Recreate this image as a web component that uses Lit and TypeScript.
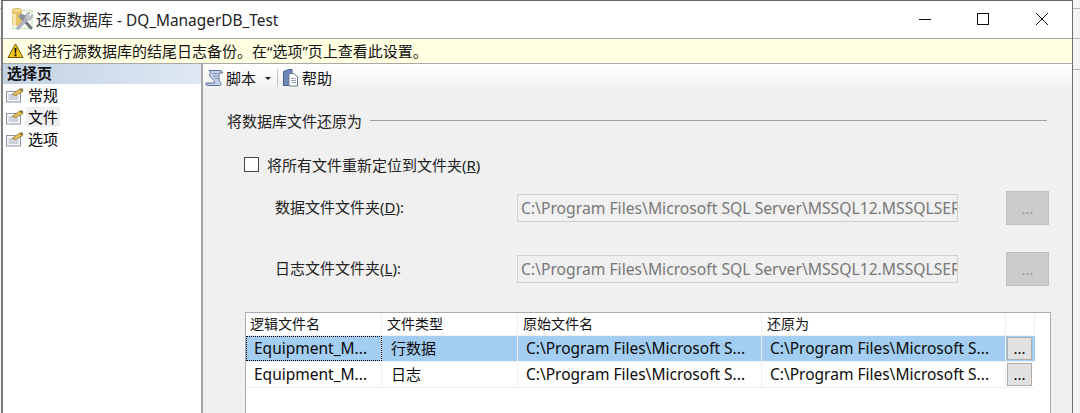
import { LitElement, html, css, svg } from "lit";
import { customElement } from "lit/decorators.js";

const pageIcon = svg`<svg class="ico" width="18" height="16" viewBox="0 0 18 16">
  <rect x="0.5" y="4.5" width="14" height="10.500" fill="#f7f8fa" stroke="#8a94a3"/>
  <path d="M2.500 8h9M2.500 10h10M2.500 12h10" stroke="#a3adba" stroke-width="1"/>
  <path d="M6 7.500L13 2.500l3.500 0 .5 2-7 4z" fill="#e3bd55" stroke="#8c7430" stroke-width=".7"/>
  <path d="M13.500 1.500h3l.5 2-2 .5z" fill="#77672f"/>
</svg>`;

const titleIcon = svg`<svg width="22" height="25" viewBox="0 0 22 25">
  <path d="M12 3.500h9v18H2v-3" fill="none" stroke="#b5e3a0" stroke-width="1.500" stroke-dasharray="2 1"/>
  <path d="M1 3.500c0-3.500 10-3.500 10 0v13c0 3-10 3-10 0z" fill="#e6c262"/>
  <path d="M1 3.500c0 2.500 10 2.500 10 0S1 1 1 3.500z" fill="#f3df9b" stroke="#c79e36" stroke-width=".5"/>
  <path d="M1.500 5.500v11c0 1.500 2 2 3.500 2.200V7C3.500 7 2 6.500 1.500 5.500z" fill="#f6e5ae"/>
  <path d="M11 11l9 10" stroke="#70767d" stroke-width="3" stroke-linecap="round"/>
  <path d="M7 9.500l3-3 5 2-2 3.500-2 .5z" fill="#8b9198"/>
  <path d="M7 21l10-10.500" stroke="#aeb3b9" stroke-width="3.500" stroke-linecap="round"/>
  <path d="M14.500 10l1-3.500 3.500-1.500-1.500 3 2 1.500 2.500-2v2.500L19 13l-3 .5z" fill="#c5c9ce" stroke="#7f858c" stroke-width=".5"/>
</svg>`;

const warnIcon = svg`<svg width="17" height="16" viewBox="0 0 17 16">
  <path d="M8.500 1l7.500 13.500H1z" fill="#f5c518" stroke="#6b5a10" stroke-width="1" stroke-linejoin="round"/>
  <path d="M7.500 5h2l-.4 5.500H7.900zM7.500 11.300h2v2h-2z" fill="#111"/>
</svg>`;

const scrollIcon = svg`<svg width="19" height="18" viewBox="0 0 19 18">
  <path d="M4 1.500h11c1.500 0 2.500 1 2.500 2.500h-3.500v6c0 2 1.500 3 2 4.500.3 1.200-.5 2-1.500 2H3c-1.500 0-2.500-1-2-2.500h8.500c.3-2-1-3.300-3-5S3.800 6 5 4.500 4.500 2.500 4 1.500z" fill="#c3d1e8" stroke="#5d6f96" stroke-width="1" stroke-linejoin="round"/>
  <path d="M7.500 4.500h5M8 7h4.500M10 9.500h3" stroke="#7d8fb3" stroke-width="1"/>
</svg>`;

const helpIcon = svg`<svg width="16" height="18" viewBox="0 0 16 18">
  <path d="M.5 2.500L6 .5h3v14L6 16.500H.5z" fill="#6f86b8" stroke="#47598a"/>
  <path d="M6 4.500h5l3.500 3.500v9H6z" fill="#fff" stroke="#6a7893"/>
  <path d="M8 9.500h5M8 11.500h5M8 13.500h5" stroke="#9aa7b8"/>
</svg>`;

const navItems = ["常规", "文件", "选项"];

const rows = [
  { name: "Equipment_M...", type: "行数据", sel: true },
  { name: "Equipment_M...", type: "日志", sel: false },
];
const pathCell = "C:\\Program Files\\Microsoft S...";
const pathField = "C:\\Program Files\\Microsoft SQL Server\\MSSQL12.MSSQLSER";

@customElement("app-root")
export class AppRoot extends LitElement {
  static styles = css`
    :host {
      display: block;
      width: 1080px;
      height: 413px;
      overflow: hidden;
      background: linear-gradient(180deg, #f4f4f4 0 8px, #b8b8b8 8px 9px, #f4f4f4 9px 38px, #b8b8b8 38px 39px, #f4f4f4 39px 69px, #b8b8b8 69px 70px, #f4f4f4 70px 413px);
      font-family: "Noto Sans", "Noto Sans CJK SC", sans-serif;
      color: #000;
    }
    .window {
      box-sizing: border-box;
      width: 1072px;
      height: 413px;
      margin-left: 1px;
      border-left: 2px solid #7c7c7c;
      border-right: 1px solid #6e6e6e;
      border-top: 1px solid #666;
      background: #fff;
      display: flex;
      flex-direction: column;
      overflow: hidden;
    }
    .title {
      height: 37px;
      flex: none;
      display: flex;
      align-items: center;
      font-size: 15px;
      color: #222;
      padding-left: 8px;
      padding-bottom: 1px;
      box-sizing: border-box;
      background: #fff;
    }
    .title .txt { margin-left: 3px; white-space: pre; font-size: 15.4px; }
    .winbtn {
      flex: none;
      display: flex;
      margin-left: auto;
      align-items: center;
      margin-right: 24px;
      margin-top: 1px;
    }
    .winbtn svg { display: block; }
    .warn {
      flex: none;
      box-sizing: border-box;
      height: 26px;
      border-top: 1px solid #a9a9a9;
      border-bottom: 1px solid #a9a9a9;
      background: #ffffe1;
      display: flex;
      align-items: center;
      padding: 0 0 2px 4px;
      font-size: 15px;
      color: #111;
      gap: 3px;
    }
    .warn svg { flex: none; margin-top: 2px; }
    .main { flex: 1; display: grid; grid-template-columns: 200px 1fr; min-height: 0; }
    .side {
      border-right: 2px solid #a6a6a6;
      background: #fff;
    }
    .side-h {
      height: 20px;
      line-height: 19px;
      padding-left: 4px;
      font-size: 15px;
      font-weight: 700;
      background: linear-gradient(90deg, #c2d1e2, #dfe9f5);
      color: #111;
    }
    .nav { display: flex; flex-direction: column; gap: 2px; padding-top: 1px; }
    .nav-i {
      height: 20px;
      display: flex;
      align-items: center;
      padding-left: 3px;
      font-size: 15px;
      gap: 2px;
    }
    .nav-i span { padding: 0 2px; line-height: 20px; }
    .nav-i.cur span { background: #f0f0f0; }
    .ico { flex: none; }
    .content { background: #f0f0f0; min-width: 0; overflow: hidden; }
    .tools {
      height: 27px;
      display: flex;
      align-items: center;
      font-size: 15px;
      padding-left: 2px;
      background: linear-gradient(180deg, #fff, #f0f0f0);
      color: #111;
    }
    .tools .lbl { margin-left: 2px; }
    .tools .help { margin-left: 3px; }
    .caret { width: 0; height: 0; border: 3px solid transparent; border-top: 3px solid #222; border-bottom: 0; margin: 2px 6px 0 9px; }
    .sep { width: 1px; height: 18px; background: #c4c4c4; margin: 0 5px 0 0; }
    .tools svg { flex: none; }
    .body { padding: 0 25px 0 23px; }
    .group {
      display: flex;
      align-items: center;
      font-size: 15px;
      gap: 8px;
      height: 20px;
      margin-top: 19px;
      padding-left: 1px;
      color: #222;
    }
    .group i { flex: 1; height: 1px; background: #a0a0a0; }
    .check {
      display: flex;
      align-items: center;
      gap: 8px;
      font-size: 15px;
      margin: 24px 0 0 18px;
      height: 20px;
      color: #222;
    }
    .box { width: 13px; height: 13px; border: 1px solid #444; background: #fff; flex: none; }
    .field {
      display: grid;
      grid-template-columns: 242px 441px 48px 43px;
      align-items: center;
      height: 34px;
      margin-left: 49px;
      font-size: 15px;
      color: #222;
    }
    .field > span { padding-bottom: 3px; }
    .f1 { margin-top: 17px; }
    .f2 { margin-top: 27px; }
    .input {
      box-sizing: border-box;
      height: 28px;
      border: 1px solid #d0d0d0;
      background: #f0f0f0;
      color: #787878;
      line-height: 26px;
      padding-left: 3px;
      font-size: 15.7px;
      overflow: hidden;
      white-space: nowrap;
    }
    .dbtn {
      grid-column: 4;
      box-sizing: border-box;
      height: 34px;
      background: #cccccc;
      border: 1px solid #bfbfbf;
      color: #9c9c9c;
      text-align: center;
      line-height: 32px;
      font-size: 15px;
    }
    .table {
      box-sizing: border-box;
      margin: 26px 0 0 19px;
      width: 806px;
      height: 120px;
      background: #fff;
      border: 1px solid #ababab;
      border-bottom: 0;
      font-size: 14px;
    }
    .tr {
      display: grid;
      grid-template-columns: 136px 136px 244px 244px 29px;
      width: 789px;
      border-bottom: 1px solid #f0f0f0;
      box-sizing: border-box;
    }
    .th { height: 23px; }
    .th > div {
      border-right: 1px solid #f0f0f0;
      padding-left: 5px;
      line-height: 22px;
      color: #111;
      white-space: nowrap;
    }
    .th > div:first-child { padding-left: 4px; }
    .row { height: 26px; font-size: 15.5px; }
    .row > div {
      border-right: 1px solid #f0f0f0;
      line-height: 24px;
      padding-left: 8px;
      overflow: hidden;
      white-space: nowrap;
      color: #0b0b0b;
      box-sizing: border-box;
    }
    .row.sel { background: #a3cef1; }
    .row.sel > .name { outline: 1px dotted #000; outline-offset: -1px; }
    .row .name { padding-left: 8px; }
    .row .type { padding-left: 9px; font-size: 15px; }
    .row .btncell { padding: 1px 0 0 0; border-right: 0; line-height: 0; }
    .mini {
      box-sizing: border-box;
      width: 25px;
      height: 23px;
      margin-left: 1px;
      background: #e1e1e1;
      border: 1px solid #adadad;
      text-align: center;
      font-size: 15px;
      line-height: 20px;
      color: #000;
    }
  `;

  render() {
    return html`<div class="window">
      <div class="title">
        ${titleIcon}
        <span class="txt">还原数据库 - DQ_ManagerDB_Test</span>
        <div class="winbtn">
          <svg width="129" height="24" viewBox="0 0 129 24" fill="none" stroke="#111">
            <path d="M0 11.500h12"/>
            <rect x="58.500" y="5.500" width="11" height="11"/>
            <path d="M117 5l12 12M129 5l-12 12"/>
          </svg>
        </div>
      </div>
      <div class="warn">${warnIcon}<span>将进行源数据库的结尾日志备份。在“选项”页上查看此设置。</span></div>
      <div class="main">
        <div class="side">
          <div class="side-h">选择页</div>
          <div class="nav">
            ${navItems.map(
              (n) => html`<div class="nav-i ${n === "文件" ? "cur" : ""}">${pageIcon}<span>${n}</span></div>`
            )}
          </div>
        </div>
        <div class="content">
          <div class="tools">
            ${scrollIcon}<span class="lbl">脚本</span><span class="caret"></span><span class="sep"></span>${helpIcon}<span class="lbl help">帮助</span>
          </div>
          <div class="body">
            <div class="group"><span>将数据库文件还原为</span><i></i></div>
            <div class="check"><span class="box"></span><span>将所有文件重新定位到文件夹(<u>R</u>)</span></div>
            <div class="field f1">
              <span>数据文件文件夹(<u>D</u>):</span>
              <div class="input">${pathField}</div>
              <div class="dbtn">...</div>
            </div>
            <div class="field f2">
              <span>日志文件文件夹(<u>L</u>):</span>
              <div class="input">${pathField}</div>
              <div class="dbtn">...</div>
            </div>
            <div class="table">
              <div class="tr th">
                <div>逻辑文件名</div><div>文件类型</div><div>原始文件名</div><div>还原为</div><div></div>
              </div>
              ${rows.map(
                (r) => html`<div class="tr row ${r.sel ? "sel" : ""}">
                  <div class="name">${r.name}</div>
                  <div class="type">${r.type}</div>
                  <div>${pathCell}</div>
                  <div>${pathCell}</div>
                  <div class="btncell"><div class="mini">...</div></div>
                </div>`
              )}
            </div>
          </div>
        </div>
      </div>
    </div>`;
  }
}
